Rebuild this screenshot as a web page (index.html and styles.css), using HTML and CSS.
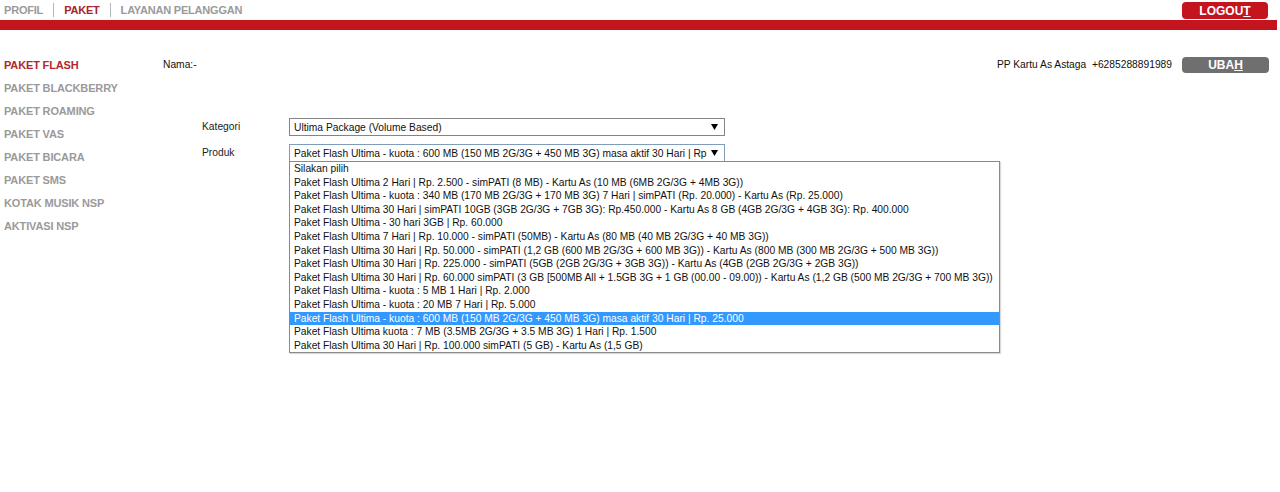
FILE: index.html
```html
<!DOCTYPE html>
<html lang="id">
<head>
    <meta charset="UTF-8">
    <title>Paket Flash</title>
    <link rel="stylesheet" href="styles.css">
</head>
<body>
    <div class="topbar">
        <nav class="topnav">
            <a class="nav-link">PROFIL</a>
            <span class="nav-sep"></span>
            <a class="nav-link active">PAKET</a>
            <span class="nav-sep"></span>
            <a class="nav-link">LAYANAN PELANGGAN</a>
        </nav>
        <a class="btn btn-logout">LOGOU<u>T</u></a>
    </div>
    <div class="redbar"></div>

    <div class="main">
        <ul class="sidebar">
            <li class="active">PAKET FLASH</li>
            <li>PAKET BLACKBERRY</li>
            <li>PAKET ROAMING</li>
            <li>PAKET VAS</li>
            <li>PAKET BICARA</li>
            <li>PAKET SMS</li>
            <li>KOTAK MUSIK NSP</li>
            <li>AKTIVASI NSP</li>
        </ul>

        <div class="content">
            <div class="info-row">
                <span>Nama:-</span>
                <div class="account">
                    <span>PP Kartu As Astaga&nbsp; +6285288891989</span>
                    <a class="btn btn-ubah">UBA<u>H</u></a>
                </div>
            </div>

            <div class="form">
                <div class="form-row">
                    <label>Kategori</label>
                    <div class="select">
                        <span class="select-text">Ultima Package (Volume Based)</span>
                        <svg class="arrow" width="7" height="6" viewBox="0 0 7 6"><polygon points="0,0 7,0 3.5,6" fill="#000"/></svg>
                    </div>
                </div>
                <div class="form-row">
                    <label>Produk</label>
                    <div class="select-wrap">
                        <div class="select focused">
                            <span class="select-text">Paket Flash Ultima - kuota : 600 MB (150 MB 2G/3G + 450 MB 3G) masa aktif 30 Hari | Rp</span>
                            <svg class="arrow" width="7" height="6" viewBox="0 0 7 6"><polygon points="0,0 7,0 3.5,6" fill="#000"/></svg>
                        </div>
                        <ul class="options">
                            <li>Silakan pilih</li>
                            <li>Paket Flash Ultima 2 Hari | Rp. 2.500 - simPATI (8 MB) - Kartu As (10 MB (6MB 2G/3G + 4MB 3G))</li>
                            <li>Paket Flash Ultima - kuota : 340 MB (170 MB 2G/3G + 170 MB 3G) 7 Hari | simPATI (Rp. 20.000) - Kartu As (Rp. 25.000)</li>
                            <li>Paket Flash Ultima 30 Hari | simPATI 10GB (3GB 2G/3G + 7GB 3G): Rp.450.000 - Kartu As 8 GB (4GB 2G/3G + 4GB 3G): Rp. 400.000</li>
                            <li>Paket Flash Ultima - 30 hari 3GB | Rp. 60.000</li>
                            <li>Paket Flash Ultima 7 Hari | Rp. 10.000 - simPATI (50MB) - Kartu As (80 MB (40 MB 2G/3G + 40 MB 3G))</li>
                            <li>Paket Flash Ultima 30 Hari | Rp. 50.000 - simPATI (1,2 GB (600 MB 2G/3G + 600 MB 3G)) - Kartu As (800 MB (300 MB 2G/3G + 500 MB 3G))</li>
                            <li>Paket Flash Ultima 30 Hari | Rp. 225.000 - simPATI (5GB (2GB 2G/3G + 3GB 3G)) - Kartu As (4GB (2GB 2G/3G + 2GB 3G))</li>
                            <li>Paket Flash Ultima 30 Hari | Rp. 60.000 simPATI (3 GB [500MB All + 1.5GB 3G + 1 GB (00.00 - 09.00)) - Kartu As (1,2 GB (500 MB 2G/3G + 700 MB 3G))</li>
                            <li>Paket Flash Ultima - kuota : 5 MB 1 Hari | Rp. 2.000</li>
                            <li>Paket Flash Ultima - kuota : 20 MB 7 Hari | Rp. 5.000</li>
                            <li class="selected">Paket Flash Ultima - kuota : 600 MB (150 MB 2G/3G + 450 MB 3G) masa aktif 30 Hari | Rp. 25.000</li>
                            <li>Paket Flash Ultima kuota : 7 MB (3.5MB 2G/3G + 3.5 MB 3G) 1 Hari | Rp. 1.500</li>
                            <li>Paket Flash Ultima 30 Hari | Rp. 100.000 simPATI (5 GB) - Kartu As (1,5 GB)</li>
                        </ul>
                    </div>
                </div>
            </div>
        </div>
    </div>
</body>
</html>
```

FILE: styles.css
```css
* {
    margin: 0;
    padding: 0;
    box-sizing: border-box;
}

html, body {
    min-height: 100%;
}

body {
    font-family: "Liberation Sans", Arial, sans-serif;
    font-size: 10.25px;
    color: #222;
    background: #fff;
}

/* header */
.topbar {
    height: 20px;
    display: flex;
    align-items: center;
    justify-content: space-between;
    padding: 0 12px 0 4px;
}

.topnav {
    display: flex;
    align-items: center;
    gap: 10px;
}

.nav-link {
    font-size: 11px;
    font-weight: bold;
    color: #9a9a9a;
    letter-spacing: -0.2px;
}

.nav-link.active {
    color: #a8232b;
}

.nav-sep {
    width: 1px;
    height: 14px;
    background: #b8b8b8;
}

.btn {
    display: flex;
    align-items: center;
    justify-content: center;
    width: 86px;
    height: 17px;
    border-radius: 4px;
    color: #fff;
    font-weight: bold;
    font-size: 12px;
}

.btn-logout {
    background: #c4151f;
    margin-top: 1px;
}

.redbar {
    height: 10px;
    margin-right: 3px;
    background: #c4151f;
}

/* body */
.main {
    display: flex;
    padding-top: 24px;
    padding-bottom: 40px;
}

.sidebar {
    list-style: none;
    width: 163px;
    padding-left: 4px;
}

.sidebar li {
    height: 23px;
    line-height: 23px;
    font-size: 11px;
    font-weight: bold;
    color: #9a9a9a;
    letter-spacing: -0.15px;
}

.sidebar li.active {
    color: #b4262d;
}

.content {
    flex: 1;
    padding-right: 11px;
}

.info-row {
    display: flex;
    justify-content: space-between;
    align-items: center;
    margin-top: 2px;
    height: 17px;
    color: #111;
}

.account {
    display: flex;
    align-items: center;
    gap: 10px;
}

.btn-ubah {
    background: #6f6f6f;
    width: 87px;
    height: 16px;
}

.form {
    margin-top: 45px;
    margin-left: 39px;
    display: flex;
    flex-direction: column;
    gap: 8px;
}

.form-row {
    display: flex;
    align-items: flex-start;
}

.form-row label {
    width: 87px;
    height: 18px;
    line-height: 17px;
    color: #222;
}

.select {
    width: 436px;
    height: 18px;
    border: 1px solid #848484;
    display: flex;
    align-items: center;
    justify-content: space-between;
    gap: 4px;
    padding: 0 6px 0 4px;
    background: #fff;
    color: #111;
}

.select-text {
    white-space: nowrap;
    overflow: hidden;
}

.select.focused {
    border-color: #7f9db9;
}

.arrow {
    flex: none;
}

.options {
    width: 711px;
    margin-top: -1px;
    list-style: none;
    border: 1px solid #8a8a8a;
    box-shadow: 1px 1px 1px rgba(0, 0, 0, 0.15);
    background: #fff;
}

.options li {
    height: 13.6px;
    line-height: 13.6px;
    padding-left: 4px;
    white-space: nowrap;
    color: #111;
}

.options li.selected {
    background: #3399ff;
    color: #fff;
}
```
